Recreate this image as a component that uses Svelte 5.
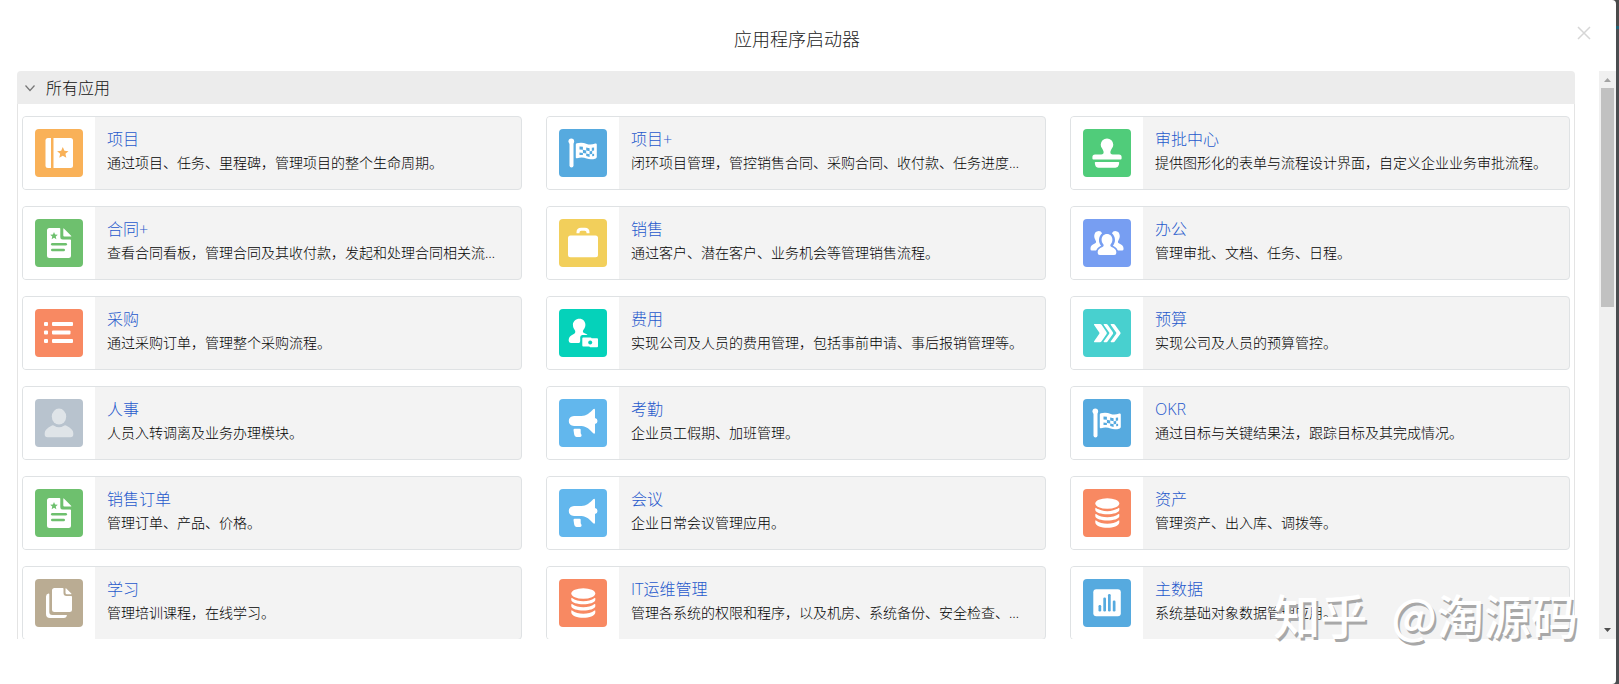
<script>
  let open = $state(true);

  // glyphs are drawn on a 48x48 tile; currentColor is the tile colour, used for cut-outs
  const star = (cx, cy, r) => {
    const pts = [];
    for (let i = 0; i < 10; i++) {
      const a = -Math.PI / 2 + (i * Math.PI) / 5;
      const d = i % 2 ? r * 0.46 : r;
      pts.push(`${(cx + d * Math.cos(a)).toFixed(2)},${(cy + d * Math.sin(a)).toFixed(2)}`);
    }
    return `<polygon fill="currentColor" points="${pts.join(' ')}"/>`;
  };

  const glyphs = {
    ledger: `<path d="M13 9h3v30h-3a2.5 2.5 0 0 1-2.5-2.5v-25A2.5 2.5 0 0 1 13 9z"/><path d="M18.500 9h17a2.500 2.500 0 0 1 2.500 2.500v25a2.500 2.500 0 0 1-2.500 2.500h-17z"/>${star(27.8, 24, 6)}`,
    contract: `<path d="M14.500 9H24.500a.8.8 0 0 1 .8.8V18a2.500 2.500 0 0 0 2.500 2.500h7.400a.8.8 0 0 1 .8.8V36.500a2.500 2.500 0 0 1-2.500 2.500h-19A2.500 2.500 0 0 1 12 36.500v-25A2.500 2.500 0 0 1 14.500 9z"/><path d="M28.300 9.900q0-1 .8-.2l7 7q.7.9-.3.9h-6.500a1 1 0 0 1-1-1z"/>${star(19, 17, 4)}<rect x="16" y="24" width="16" height="2.500" rx="1.200" fill="currentColor"/><rect x="16" y="29.700" width="14" height="2.500" rx="1.200" fill="currentColor"/>`,
    list: `<rect x="9" y="13" width="4" height="4" rx="1"/><rect x="9" y="21.500" width="4" height="4" rx="1"/><rect x="9" y="30" width="4" height="4" rx="1"/><rect x="17" y="13" width="21" height="4" rx="1"/><rect x="17" y="21.500" width="18.500" height="4" rx="1"/><rect x="17" y="30" width="21" height="4" rx="1"/>`,
    person: `<g opacity=".55"><ellipse cx="24" cy="17.600" rx="7.200" ry="8"/><path d="M17 26.500q1.200-.5 2.200.2a8.500 8.500 0 0 0 9.600 0q1-.7 2.200-.2 7.300 3.500 7.300 7.500v1.500q0 2.800-2.800 2.800h-23q-2.800 0-2.800-2.800V34q0-4 7.300-7.500z"/></g>`,
    files: `<path d="M19.500 9h8.200a.8.8 0 0 1 .8.8V14a3 3 0 0 0 3 3h4.700a.8.8 0 0 1 .8.8V30.500a2.500 2.500 0 0 1-2.500 2.500h-15a2.500 2.500 0 0 1-2.500-2.500v-19A2.500 2.500 0 0 1 19.500 9z"/><path d="M30.500 9.700q0-1 .8-.2l5 5q.6.7-.3.700H32a1.500 1.500 0 0 1-1.500-1.500z"/><path d="M13.500 14.500q.8-.3.800.8V33a3 3 0 0 0 3 3h14q1 0 .5.900Q31 39 29 39H15q-4 0-4-4V17.500q0-2.500 2.500-3z"/>`,
    flag: `<circle cx="12.300" cy="12.200" r="2.800"/><path d="M10.500 12h4v24.500a2 2 0 0 1-4 0z"/><path d="M16.800 15.500q0-1 1-1.300 5.500-1.200 10 .7 3.500 1.300 8.500-.3 1.500-.3 1.500 1V28q0 1-1 1.400-5 1.700-9.200.1-4.300-1.700-9.600-.3-1.200.3-1.200-.9z"/><g fill="currentColor"><path d="M20.500 17.500l3.400.2v3l-3.400-.2zM27.200 18.500l3.400.7v3l-3.400-.7zM32.800 18.800l2.300-.4v3l-2.300.5zM23.900 20.700l3.300.8v3l-3.300-.6zM30.600 22.200l2.600-.2v3l-2.600.2zM20.500 23.600l3.400.3v2.200l-3.400-.1zM27.200 24.500l3.400.7V28l-3.400-.9zM33.200 25l1.900-.3v2.200l-1.900.4z"/></g>`,
    briefcase: `<rect x="9" y="16.500" width="30" height="21.700" rx="2.500"/><path d="M17.500 14.200v-1q0-4.500 4.500-4.500h4q4.500 0 4.500 4.500v1h-3v-.7q0-1.800-1.800-1.800h-3.400q-1.800 0-1.800 1.800v.7z"/>`,
    stamp: `<path d="M24 9.500a6.300 6.300 0 0 1 6.300 6.300c0 3-2.500 4.200-2.900 7-.2 1.800.6 2.700 2.400 2.700h6.200a2.600 2.600 0 0 1 2.600 2.600v1.400a1 1 0 0 1-1 1H10.400a1 1 0 0 1-1-1v-1.400a2.600 2.600 0 0 1 2.600-2.600h6.200c1.800 0 2.600-.9 2.400-2.700-.4-2.800-2.900-4-2.900-7A6.300 6.300 0 0 1 24 9.500z"/><path d="M12.600 33h22.800q1 0 .8.900L35.800 36q-.7 2.800-3.300 2.800h-17q-2.600 0-3.300-2.800l-.4-2.100q-.2-.9.800-.9z"/>`,
    people: `<path d="M15.800 12q-4.300.2-4.600 5 0 2.600 1.400 4.500c.9 1.200.6 2.300-.8 3-2.800 1.200-4.300 2.500-4.300 4.800v1q0 1.200 1.300 1.200h4.400q1.300-2.800 5-4.500c-3.500-4.300-2.600-9.500.9-12.700Q18 12 15.800 12z"/><path d="M32.200 12q4.300.2 4.600 5 0 2.600-1.400 4.500c-.9 1.200-.6 2.300.8 3 2.800 1.200 4.300 2.500 4.300 4.800v1q0 1.200-1.300 1.200h-4.400q-1.300-2.800-5-4.500c3.500-4.300 2.600-9.500-.9-12.700Q30 12 32.200 12z"/><path stroke="currentColor" stroke-width="3" paint-order="stroke" d="M24 15c3.200 0 5.400 2.400 5.400 5.700 0 1.900-.7 3.300-1.600 4.400-.9 1.300-.5 2.300.8 2.900 3.200 1.300 4.700 2.800 4.700 5v.9q0 2.100-2.100 2.100H16.800q-2.100 0-2.100-2.100V33c0-2.200 1.500-3.700 4.700-5 1.300-.6 1.700-1.600.8-2.900-.9-1.100-1.600-2.500-1.600-4.400 0-3.300 2.200-5.700 5.400-5.700z"/>`,
    expense: `<path d="M20.500 9.700c3.500 0 5.900 2.600 5.900 6.100 0 2.100-.8 3.600-1.900 4.900-1 1.200-.8 2.600.6 3.300l3 1.500q.6.500-.2.600h-4.700q-2 .2-2 2.200V32q0 1.900-1.400 1.900h-8q-2.100 0-2.100-2.100v-1.100c0-2.600 1.800-4.300 5.100-5.800 1.700-.7 1.900-2.600.9-4-1-1.300-1.800-2.900-1.800-5.100 0-3.500 2.900-6.100 6.600-6.100z"/><path d="M24.200 28.500h7.500q.7 0 .9.700h5.500q.9 0 .9.900v7.200q0 .9-.9.900h-6.800q-.8 0-.9-.8h-6.200q-.9 0-.9-.9v-7.100q0-.9.900-.9z"/><circle cx="31.200" cy="33.400" r="2" fill="currentColor"/>`,
    megaphone: `<path d="M15 17h7.500c4.700 0 8.700-3.300 11.700-6.700q1.600-1.200 1.800.7v8q2.500.4 2.500 3t-2.500 3v8.500q-.2 2-1.800.8c-3-3.500-7-7.300-11.700-7.300H15q-5.200-.5-5.200-5T15 17z"/><path d="M15.600 29.700h5.100q1 0 1 1v2.800q0 1.400.7 2.100.7 2.400-1.400 2.500h-3.500q-2-.3-2.300-2.500l-.7-4.600q0-1.300 1.100-1.300z"/>`,
    database: `<ellipse cx="24.300" cy="14.500" rx="12" ry="5.300"/><path d="M12.300 19.200q0-.8.700-.3c6 4.300 16.600 4.300 22.600 0q.7-.5.700.3v1.800c-.5 5.600-23.500 5.600-24 0z"/><path d="M12.300 25.400q0-.8.700-.3c6 4.300 16.600 4.300 22.600 0q.7-.5.700.3v1.800c-.5 5.600-23.500 5.600-24 0z"/><path d="M12.300 31.700q0-.8.700-.3c6 4.300 16.600 4.300 22.600 0q.7-.5.700.3v1.800c-.5 7-23.500 7-24 0z"/>`,
    chevrons: `<path d="M11.500 15h5.500q1 0 1.600.8l5 7.500q.5.900 0 1.700l-5 7.300q-.6.900-1.600.9h-5.500q-1 0-.4-.9l5.200-7.600q.3-.6 0-1.100l-5.200-7.700q-.6-.9.400-.9z"/><path d="M21.300 15h2q.9 0 1.400.8l5.200 7.500q.5.900 0 1.700l-5.200 7.300q-.5.900-1.400.9h-2q-1.200 0-.5-1l5.400-7.500q.3-.6 0-1.100l-5.400-7.600q-.7-1 .5-1z"/><path d="M28.300 15h2.200q.9 0 1.400.8l5.400 7.500q.6.900 0 1.700l-5.400 7.300q-.5.900-1.400.9h-2.200q-1.200 0-.5-1l5.400-7.500q.3-.6 0-1.100l-5.400-7.600q-.7-1 .5-1z"/>`,
    chart: `<rect x="10.300" y="10.300" width="27.500" height="27" rx="3"/><g fill="currentColor"><rect x="15.500" y="26" width="2.700" height="6.500" rx="1.200"/><rect x="20.300" y="18.500" width="2.700" height="14" rx="1.200"/><rect x="25" y="15" width="2.700" height="17.500" rx="1.200"/><rect x="29.800" y="21.500" width="2.700" height="11" rx="1.200"/></g>`
  };

  const apps = [
    { name: '项目', desc: '通过项目、任务、里程碑，管理项目的整个生命周期。', icon: 'ledger', color: '#f9b158' },
    { name: '项目+', desc: '闭环项目管理，管控销售合同、采购合同、收付款、任务进度等。', icon: 'flag', color: '#56aadf' },
    { name: '审批中心', desc: '提供图形化的表单与流程设计界面，自定义企业业务审批流程。', icon: 'stamp', color: '#50cc7a' },
    { name: '合同+', desc: '查看合同看板，管理合同及其收付款，发起和处理合同相关流程。', icon: 'contract', color: '#6ec06e' },
    { name: '销售', desc: '通过客户、潜在客户、业务机会等管理销售流程。', icon: 'briefcase', color: '#f2cf5b' },
    { name: '办公', desc: '管理审批、文档、任务、日程。', icon: 'people', color: '#779ef2' },
    { name: '采购', desc: '通过采购订单，管理整个采购流程。', icon: 'list', color: '#f88962' },
    { name: '费用', desc: '实现公司及人员的费用管理，包括事前申请、事后报销管理等。', icon: 'expense', color: '#05d2ba' },
    { name: '预算', desc: '实现公司及人员的预算管控。', icon: 'chevrons', color: '#48d0cf' },
    { name: '人事', desc: '人员入转调离及业务办理模块。', icon: 'person', color: '#b8c3ce' },
    { name: '考勤', desc: '企业员工假期、加班管理。', icon: 'megaphone', color: '#62b7ed' },
    { name: 'OKR', desc: '通过目标与关键结果法，跟踪目标及其完成情况。', icon: 'flag', color: '#56aadf' },
    { name: '销售订单', desc: '管理订单、产品、价格。', icon: 'contract', color: '#6ec06e' },
    { name: '会议', desc: '企业日常会议管理应用。', icon: 'megaphone', color: '#62b7ed' },
    { name: '资产', desc: '管理资产、出入库、调拨等。', icon: 'database', color: '#f88962' },
    { name: '学习', desc: '管理培训课程，在线学习。', icon: 'files', color: '#baac93' },
    { name: 'IT运维管理', desc: '管理各系统的权限和程序，以及机房、系统备份、安全检查、日志等。', icon: 'database', color: '#f88962' },
    { name: '主数据', desc: '系统基础对象数据管理应用。', icon: 'chart', color: '#56aadf' }
  ];
</script>

<div class="modal" role="dialog" aria-labelledby="launcher-title">
  <header class="modal-header">
    <h1 id="launcher-title">应用程序启动器</h1>
    <button class="close" aria-label="关闭">
      <svg width="14" height="14" viewBox="0 0 14 14"><path d="M1 1l12 12M13 1L1 13" /></svg>
    </button>
  </header>

  <div class="modal-body">
    <section class="panel">
      <button class="panel-header" aria-expanded={open} onclick={() => (open = !open)}>
        <svg class:closed={!open} width="12" height="12" viewBox="0 0 12 12"><path d="M1.500 3.500L6 8.500l4.500-5" /></svg>
        <span>所有应用</span>
      </button>
      {#if open}
        <div class="grid">
          {#each apps as app (app.name)}
            <article class="card">
              <div class="card-icon">
                <svg style:background={app.color} style:color={app.color} viewBox="0 0 48 48" fill="#fff" aria-hidden="true">{@html glyphs[app.icon]}</svg>
              </div>
              <div class="card-text">
                <a href="#{app.icon}">{app.name}</a>
                <p>{app.desc}</p>
              </div>
            </article>
          {/each}
        </div>
      {/if}
    </section>

    <div class="scrollbar" aria-hidden="true">
      <svg class="arrow" viewBox="0 0 17 17" fill="#a3a3a3"><path d="M5 11l3.500-4 3.500 4z" /></svg>
      <div class="track"><div class="thumb"></div></div>
      <svg class="arrow" viewBox="0 0 17 17" fill="#505050"><path d="M5 6l3.500 4L12 6z" /></svg>
    </div>
  </div>

  <div class="watermark">
    <span>知乎</span>
    <span>@淘源码</span>
  </div>
</div>

<style>
  :global(body) {
    margin: 0;
    background: linear-gradient(#4a4a4a 26px, #1d6277 26px, #1d6277 29px, #4a4d50 29px);
    font-family: 'Open Sans', 'Noto Sans CJK SC', sans-serif;
  }
  * { box-sizing: border-box; }

  .modal {
    position: relative;
    display: flex;
    flex-direction: column;
    height: 100vh;
    margin-right: 3px;
    padding-bottom: 45px;
    background: #fff;
    border-radius: 0 4px 4px 0;
    overflow: hidden;
  }
  .modal-header {
    display: flex;
    justify-content: center;
    flex: none;
    padding: 25px 40px 18px 18px;
  }
  h1 { margin: 0; font-size: 18px; line-height: 28px; font-weight: 300; color: #222; }
  .close {
    position: absolute;
    top: 20px;
    right: 19px;
    display: grid;
    place-items: center;
    width: 26px;
    height: 26px;
    padding: 0;
    border: 0;
    background: none;
    cursor: pointer;
  }
  .close svg { fill: none; stroke: #d6d6d6; stroke-width: 1.5; }

  .modal-body { display: flex; flex: 1; gap: 24px; min-height: 0; padding-left: 17px; }
  .panel { flex: 1; min-width: 0; overflow: hidden; }
  .panel-header {
    display: flex;
    align-items: center;
    gap: 10px;
    width: 100%;
    height: 33px;
    padding: 0 7px;
    border: 0;
    border-radius: 4px 4px 0 0;
    background: #ececec;
    font-family: inherit;
    font-size: 16px;
    line-height: 24px;
    font-weight: 300;
    color: #111;
    cursor: pointer;
  }
  .panel-header svg { fill: none; stroke: #777; stroke-width: 1.2; }
  .panel-header .closed { transform: rotate(-90deg); }

  .grid {
    display: grid;
    grid-template-columns: repeat(3, minmax(0, 1fr));
    gap: 16px 24px;
    padding: 12px 4px;
    border: 1px solid #e4e4e4;
    border-top: 0;
  }
  .card {
    display: flex;
    border: 1px solid #dfe2e4;
    border-radius: 4px;
    background: #f3f3f3;
    overflow: hidden;
  }
  .card-icon { flex: none; padding: 12px; background: #fff; }
  .card-icon svg { display: block; width: 48px; height: 48px; border-radius: 4px; }
  .card-text { flex: 1; min-width: 0; padding: 10px 12px; }
  .card-text a {
    display: block;
    font-size: 16px;
    line-height: 24px;
    font-weight: 300;
    color: #1f59cc;
    text-decoration: none;
  }
  .card-text a:hover { text-decoration: underline; }
  .card-text p {
    margin: 0;
    font-size: 14px;
    line-height: 24px;
    font-weight: 300;
    color: #000;
    white-space: nowrap;
    overflow: hidden;
    text-overflow: ellipsis;
  }

  .scrollbar { display: flex; flex-direction: column; flex: none; width: 17px; background: #f0f0f0; }
  .arrow { display: block; width: 17px; height: 17px; }
  .track { flex: 1; padding: 0 2px; }
  .thumb { height: 41%; background: #c1c1c1; }

  .watermark {
    position: absolute;
    right: 38px;
    bottom: 38px;
    display: flex;
    gap: 24px;
    font-family: 'Noto Sans CJK SC', sans-serif;
    font-size: 47px;
    line-height: 64px;
    font-weight: 500;
    color: #fff;
    text-shadow: 2px 3px 0 #a8a8a8;
    pointer-events: none;
  }
</style>
